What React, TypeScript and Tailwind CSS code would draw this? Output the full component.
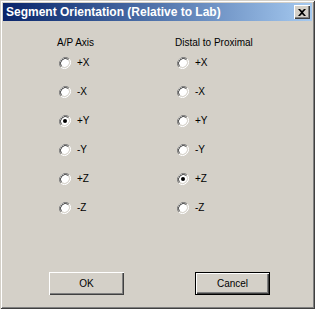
import React from "react";

const Radio = ({ checked }: { checked?: boolean }) => (
  <svg width="12" height="12" viewBox="0 0 12 12" className="shrink-0">
    <path d="M10.2 1.8A6 6 0 0 0 1.8 10.2" stroke="#808080" strokeWidth="1" fill="none" />
    <path d="M1.8 10.2A6 6 0 0 0 10.2 1.8" stroke="#ffffff" strokeWidth="1" fill="none" />
    <circle cx="6" cy="6" r="5" fill="#ffffff" />
    <path d="M9.5 2.5A5 5 0 0 0 2.5 9.5" stroke="#404040" strokeWidth="1" fill="none" />
    <path d="M2.5 9.5A5 5 0 0 0 9.5 2.5" stroke="#d4d0c8" strokeWidth="1" fill="none" />
    {checked && <circle cx="6" cy="6" r="2" fill="#000000" />}
  </svg>
);

const options = ["+X", "-X", "+Y", "-Y", "+Z", "-Z"];

const Column = ({ title, selected }: { title: string; selected: string }) => (
  <div className="flex flex-col">
    <div className="h-[20px] leading-[12px]">{title}</div>
    {options.map((o) => (
      <div key={o} className="flex h-[29px] items-start gap-[6px] pl-[2px]">
        <Radio checked={o === selected} />
        <span className="leading-[12px]">{o}</span>
      </div>
    ))}
  </div>
);

const Button = ({ label, focused }: { label: string; focused?: boolean }) => (
  <button
    className={
      "flex h-[23px] w-[75px] items-center justify-center bg-[#d4d0c8] " +
      (focused
        ? "border border-black shadow-[inset_1px_1px_#ffffff,inset_-1px_-1px_#404040,inset_-2px_-2px_#808080]"
        : "shadow-[inset_1px_1px_#ffffff,inset_-1px_-1px_#404040,inset_-2px_-2px_#808080]")
    }
  >
    {label}
  </button>
);

export default function App() {
  return (
    <div
      className="flex h-[309px] w-[315px] flex-col bg-[#d4d0c8] p-[3px] text-[10px] text-black shadow-[inset_1px_1px_#d4d0c8,inset_-1px_-1px_#404040,inset_2px_2px_#ffffff,inset_-2px_-2px_#808080]"
      style={{ fontFamily: '"Liberation Sans", Arial, sans-serif' }}
    >
      <div className="flex h-[18px] items-center justify-between bg-gradient-to-r from-[#0a246a] to-[#a6caf0] pl-[3px] pr-[2px]">
        <span className="text-[12px] font-bold text-white">Segment Orientation (Relative to Lab)</span>
        <div className="flex h-[14px] w-[16px] items-center justify-center bg-[#d4d0c8] shadow-[inset_1px_1px_#ffffff,inset_-1px_-1px_#404040,inset_-2px_-2px_#808080]">
          <svg width="8" height="7" viewBox="0 0 8 7">
            <path d="M0 0h2l2 2 2-2h2L5 3.5 8 7H6L4 5 2 7H0l3-3.5z" fill="#000" />
          </svg>
        </div>
      </div>
      <div className="flex gap-[60px] pl-[54px] pt-[16px]">
        <div className="w-[58px]">
          <Column title="A/P Axis" selected="+Y" />
        </div>
        <Column title="Distal to Proximal" selected="+Z" />
      </div>
      <div className="mt-auto flex gap-[71px] pb-[11px] pl-[46px]">
        <Button label="OK" />
        <Button label="Cancel" focused />
      </div>
    </div>
  );
}
